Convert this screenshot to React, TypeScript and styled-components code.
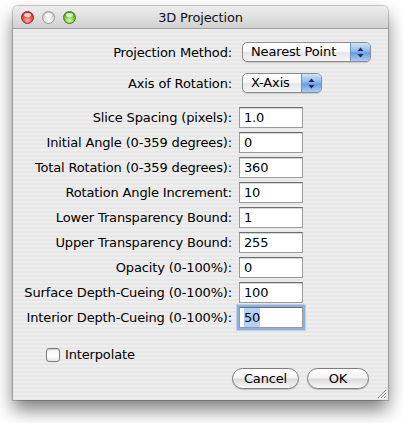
import React from 'react';
import styled, { createGlobalStyle } from 'styled-components';

const GlobalStyle = createGlobalStyle`
  html, body {
    margin: 0;
    padding: 0;
    background: #ffffff;
  }
  body {
    font-family: "DejaVu Sans", "Liberation Sans", sans-serif;
    font-size: 13px;
    letter-spacing: -0.15px;
    color: #000;
  }
`;

const Page = styled.div`
  padding: 6px 0 0 13px;
  width: 403px;
  height: 423px;
  box-sizing: border-box;
`;

const Window = styled.div`
  width: 375px;
  height: 394px;
  display: flex;
  flex-direction: column;
  border-radius: 5px 5px 0 0;
  overflow: hidden;
  position: relative;
  box-shadow: 0 10px 18px rgba(0, 0, 0, 0.5), 0 0 0 1px rgba(0, 0, 0, 0.2);
`;

const TitleBar = styled.div`
  height: 22px;
  flex: none;
  display: flex;
  align-items: center;
  position: relative;
  background: linear-gradient(to bottom, #ededed 0%, #e0e0e0 50%, #d0d0d0 100%);
  border-bottom: 1px solid #9e9e9e;
`;

const Lights = styled.div`
  display: flex;
  gap: 8px;
  padding-left: 8px;
  padding-top: 1px;
`;

const Light = styled.div<{ $color: 'red' | 'gray' | 'green' }>`
  width: 13px;
  height: 13px;
  border-radius: 50%;
  box-sizing: border-box;
  border: 1px solid
    ${p => (p.$color === 'red' ? '#8e2c2c' : p.$color === 'green' ? '#3d7a1e' : '#9a9a9a')};
  background: ${p =>
    p.$color === 'red'
      ? 'radial-gradient(circle at 50% 75%, #ffb3a8 0%, #e8504a 45%, #b51f1f 100%)'
      : p.$color === 'green'
      ? 'radial-gradient(circle at 50% 75%, #d8ffb0 0%, #7bcc3a 45%, #3f8f14 100%)'
      : 'radial-gradient(circle at 50% 75%, #ffffff 0%, #e2e2e2 45%, #b4b4b4 100%)'};
  position: relative;
  &::after {
    content: '';
    position: absolute;
    left: 2px;
    top: 1px;
    width: 7px;
    height: 4px;
    border-radius: 50%;
    background: rgba(255, 255, 255, 0.75);
  }
`;

const Title = styled.div`
  position: absolute;
  left: 0;
  right: 0;
  text-align: center;
  color: #111;
`;

const Content = styled.div`
  flex: 1;
  display: flex;
  flex-direction: column;
  padding-top: 13px;
  position: relative;
  background: repeating-linear-gradient(
    to bottom,
    #eeeeee 0px,
    #eeeeee 2px,
    #e7e7e7 2px,
    #e7e7e7 4px
  );
`;

const Row = styled.div<{ $mt: number }>`
  display: flex;
  align-items: center;
  margin-top: ${p => p.$mt}px;
`;

const Label = styled.div`
  width: 219px;
  text-align: right;
  white-space: nowrap;
  padding-right: 7px;
  box-sizing: content-box;
`;

const Popup = styled.div<{ $width: number }>`
  margin-left: 3px;
  width: ${p => p.$width}px;
  height: 20px;
  box-sizing: border-box;
  display: flex;
  border: 1px solid #8c8c8c;
  border-radius: 5px;
  overflow: hidden;
  background: linear-gradient(to bottom, #ffffff 0%, #f6f6f6 50%, #e6e6e6 51%, #f4f4f4 100%);
  box-shadow: 0 1px 1px rgba(0, 0, 0, 0.15);
`;

const PopupText = styled.div`
  flex: 1;
  padding-left: 8px;
  line-height: 18px;
`;

const PopupArrows = styled.div`
  width: 19px;
  border-left: 1px solid #6f8fbf;
  display: flex;
  align-items: center;
  justify-content: center;
  background: linear-gradient(to bottom, #cfe3fb 0%, #8fb8ee 45%, #6a9ce6 55%, #a9ccf5 100%);
`;

const Field = styled.div<{ $focused?: boolean }>`
  width: 64px;
  height: 21px;
  box-sizing: border-box;
  background: #ffffff;
  border: 1px solid #9a9a9a;
  border-top-color: #6e6e6e;
  padding-left: 4px;
  line-height: 20px;
  box-shadow: ${p =>
    p.$focused ? '0 0 0 2px #8fb0dc, 0 0 0 3px #b9cfea' : 'inset 0 1px 0 #d6d6d6'};
`;

const Selected = styled.span`
  background: #b5d1f5;
  padding: 2px 0;
`;

const CheckRow = styled.div`
  display: flex;
  align-items: center;
  gap: 5px;
  margin-top: 19px;
  padding-left: 33px;
`;

const CheckBox = styled.div`
  width: 14px;
  height: 14px;
  box-sizing: border-box;
  border: 1px solid #7c7c7c;
  border-radius: 3px;
  background: linear-gradient(to bottom, #f2f2f2 0%, #ffffff 60%, #e6e6e6 100%);
  box-shadow: inset 0 1px 1px rgba(0, 0, 0, 0.15);
`;

const Buttons = styled.div`
  display: flex;
  justify-content: flex-end;
  gap: 8px;
  padding-right: 19px;
  margin-top: 6px;
`;

const Button = styled.div<{ $width: number }>`
  width: ${p => p.$width}px;
  height: 21px;
  box-sizing: border-box;
  border: 1px solid #7d7d7d;
  border-radius: 11px;
  text-align: center;
  line-height: 19px;
  background: linear-gradient(to bottom, #ffffff 0%, #f3f3f3 45%, #dcdcdc 55%, #f8f8f8 100%);
  box-shadow: 0 1px 1px rgba(0, 0, 0, 0.2);
`;

const Grip = styled.svg`
  position: absolute;
  right: 1px;
  bottom: 1px;
`;

const ArrowsIcon = () => (
  <svg width="7" height="11" viewBox="0 0 7 11">
    <path d="M3.5 0.5 L6.5 4 H0.5 Z" fill="#1c2f4f" />
    <path d="M3.5 10.5 L6.5 7 H0.5 Z" fill="#1c2f4f" />
  </svg>
);

const fields: { label: string; value: string; focused?: boolean }[] = [
  { label: 'Slice Spacing (pixels):', value: '1.0' },
  { label: 'Initial Angle (0-359 degrees):', value: '0' },
  { label: 'Total Rotation (0-359 degrees):', value: '360' },
  { label: 'Rotation Angle Increment:', value: '10' },
  { label: 'Lower Transparency Bound:', value: '1' },
  { label: 'Upper Transparency Bound:', value: '255' },
  { label: 'Opacity (0-100%):', value: '0' },
  { label: 'Surface Depth-Cueing (0-100%):', value: '100' },
  { label: 'Interior Depth-Cueing (0-100%):', value: '50', focused: true },
];

const App = () => {
  return (
    <Page>
      <GlobalStyle />
      <Window>
        <TitleBar>
          <Lights>
            <Light $color="red" />
            <Light $color="gray" />
            <Light $color="green" />
          </Lights>
          <Title>3D Projection</Title>
        </TitleBar>
        <Content>
          <Row $mt={0}>
            <Label>Projection Method:</Label>
            <Popup $width={129}>
              <PopupText>Nearest Point</PopupText>
              <PopupArrows>
                <ArrowsIcon />
              </PopupArrows>
            </Popup>
          </Row>
          <Row $mt={11}>
            <Label>Axis of Rotation:</Label>
            <Popup $width={80}>
              <PopupText>X-Axis</PopupText>
              <PopupArrows>
                <ArrowsIcon />
              </PopupArrows>
            </Popup>
          </Row>
          {fields.map((f, i) => (
            <Row key={f.label} $mt={i === 0 ? 14 : 4}>
              <Label>{f.label}</Label>
              <Field $focused={f.focused}>
                {f.focused ? <Selected>{f.value}</Selected> : f.value}
              </Field>
            </Row>
          ))}
          <CheckRow>
            <CheckBox />
            <span>Interpolate</span>
          </CheckRow>
          <Buttons>
            <Button $width={67}>Cancel</Button>
            <Button $width={62}>OK</Button>
          </Buttons>
          <Grip width="11" height="11" viewBox="0 0 11 11">
            <path d="M10 2 L2 10 M10 5 L5 10 M10 8 L8 10" stroke="#8a8a8a" strokeWidth="1" />
            <path d="M10.8 2.8 L2.8 10.8 M10.8 5.8 L5.8 10.8" stroke="#ffffff" strokeWidth="0.8" />
          </Grip>
        </Content>
      </Window>
    </Page>
  );
};

export default App;
